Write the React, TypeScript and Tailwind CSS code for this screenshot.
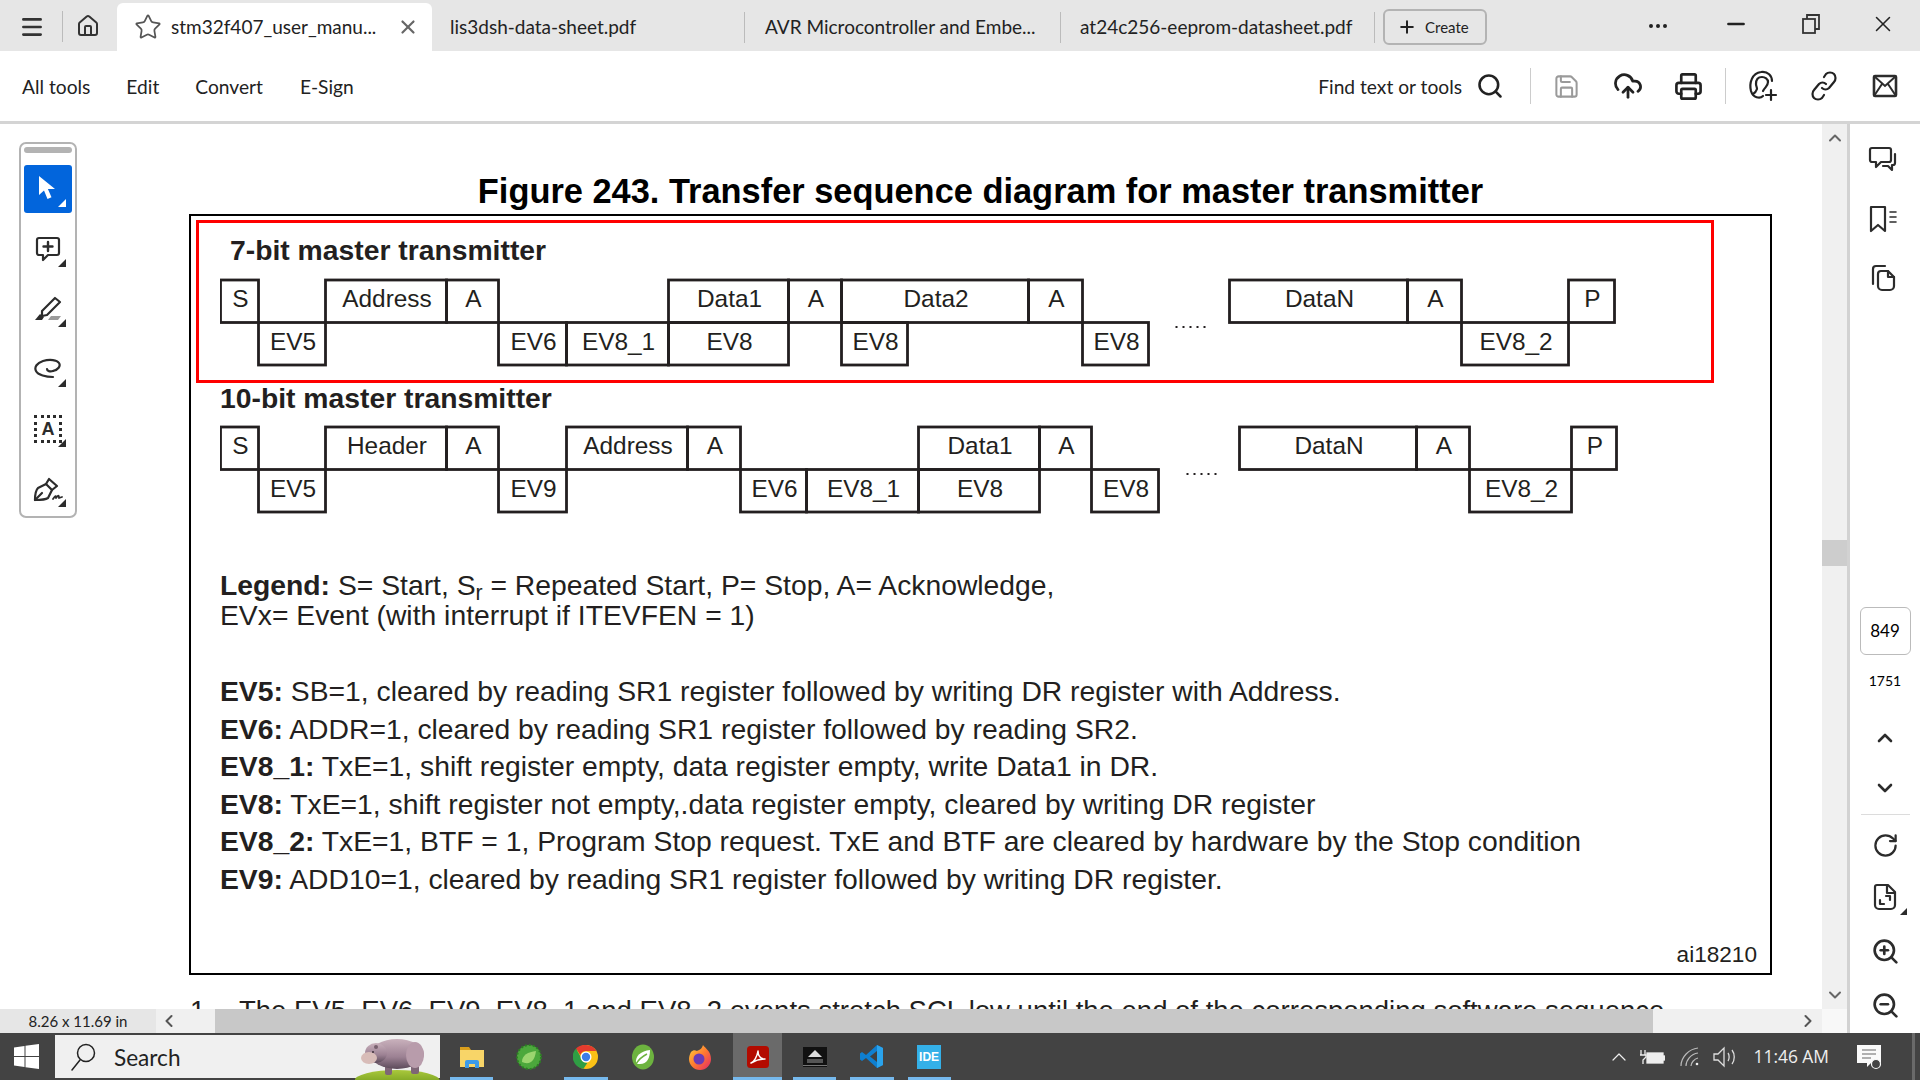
import React from 'react';
import {
  ChevronDown,
  ChevronLeft,
  ChevronRight,
  ChevronUp,
  CloudUpload,
  Home,
  Menu,
  Minus,
  MoreHorizontal,
  Plus,
  Printer,
  RotateCw,
  Save,
  Search,
  Star,
  X,
  ZoomIn,
  ZoomOut,
} from 'lucide-react';

// Cells of a sequence diagram: [left, right, row, label]; row 0 is the top row
type Cell = [number, number, number, string];

const sevenBit: Cell[] = [
  [220, 258, 0, 'S'],
  [258, 325, 1, 'EV5'],
  [325, 446, 0, 'Address'],
  [446, 498, 0, 'A'],
  [498, 566, 1, 'EV6'],
  [566, 668, 1, 'EV8_1'],
  [668, 788, 0, 'Data1'],
  [668, 788, 1, 'EV8'],
  [788, 841, 0, 'A'],
  [841, 1028, 0, 'Data2'],
  [841, 907, 1, 'EV8'],
  [1028, 1082, 0, 'A'],
  [1082, 1148, 1, 'EV8'],
  [1229, 1407, 0, 'DataN'],
  [1407, 1461, 0, 'A'],
  [1461, 1568, 1, 'EV8_2'],
  [1568, 1614, 0, 'P'],
];

const tenBit: Cell[] = [
  [220, 258, 0, 'S'],
  [258, 325, 1, 'EV5'],
  [325, 446, 0, 'Header'],
  [446, 498, 0, 'A'],
  [498, 566, 1, 'EV9'],
  [566, 687, 0, 'Address'],
  [687, 740, 0, 'A'],
  [740, 806, 1, 'EV6'],
  [806, 918, 1, 'EV8_1'],
  [918, 1039, 0, 'Data1'],
  [918, 1039, 1, 'EV8'],
  [1039, 1091, 0, 'A'],
  [1091, 1158, 1, 'EV8'],
  [1239, 1416, 0, 'DataN'],
  [1416, 1469, 0, 'A'],
  [1469, 1571, 1, 'EV8_2'],
  [1571, 1616, 0, 'P'],
];

const events = [
  ['EV5:', ' SB=1, cleared by reading SR1 register followed by writing DR register with Address.'],
  ['EV6:', ' ADDR=1, cleared by reading SR1 register followed by reading SR2.'],
  ['EV8_1:', ' TxE=1, shift register empty, data register empty, write Data1 in DR.'],
  ['EV8:', ' TxE=1, shift register not empty,.data register empty, cleared by writing DR register'],
  ['EV8_2:', ' TxE=1, BTF = 1, Program Stop request. TxE and BTF are cleared by hardware by the Stop condition'],
  ['EV9:', ' ADD10=1, cleared by reading SR1 register followed by writing DR register.'],
];

// Drawn with the page's left edge at x=220 and 2px above the first row
const Sequence = ({ cells, dotsX }: { cells: Cell[]; dotsX: number }) => (
  <svg width="1420" height="90" className="block font-['Liberation_Sans']">
    {cells.map(([left, right, row, label], i) => (
      <g key={i}>
        <rect
          x={left - 219.5}
          y={row === 0 ? 2 : 44.5}
          width={right - left}
          height={42.5}
          fill="none"
          stroke="#231f20"
          strokeWidth="2.8"
        />
        <text
          x={(left + right) / 2 - 218.5}
          y={row === 0 ? 29 : 72}
          textAnchor="middle"
          fontSize="24.4"
          fill="#231f20"
        >
          {label}
        </text>
      </g>
    ))}
    {[0, 7, 14, 21, 28].map((d) => (
      <rect key={d} x={dotsX - 218.5 + d} y={48} width="2" height="2" fill="#231f20" />
    ))}
  </svg>
);

const Corner = ({ color = 'border-b-[#2c2c2c]' }: { color?: string }) => (
  <span className={`absolute bottom-[6px] right-[6px] w-0 h-0 border-l-[8px] border-l-transparent border-b-[8px] ${color}`} />
);

const IconProps = { fill: 'none', stroke: 'currentColor', strokeLinecap: 'round', strokeLinejoin: 'round' } as const;

const LeftTools = () => (
  <div className="ml-[19px] mt-[18px] w-[58px] h-[376px] border-2 border-[#b3b3b3] rounded-[7px] bg-white flex flex-col items-center text-[#2c2c2c]">
    <div className="mt-[3px] w-12 h-[6px] rounded-[3px] bg-[#b3b3b3]" />
    <div className="mt-3 flex flex-col gap-3">
      <div className="relative w-12 h-12 rounded-[3px] bg-[#0265dc] flex items-center justify-center">
        <svg width="26" height="28" viewBox="0 0 26 28">
          <path d="M4 1v19l5-4.5 3.500 8.500 4-1.800-3.600-8.200H20z" fill="#fff" />
        </svg>
        <Corner color="border-b-white" />
      </div>
      <div className="relative w-12 h-12 flex items-center justify-center">
        <svg width="26" height="26" viewBox="0 0 26 26" {...IconProps} strokeWidth="2.2">
          <path d="M4 2h18a2 2 0 0 1 2 2v13a2 2 0 0 1-2 2H13l-5 5v-5H4a2 2 0 0 1-2-2V4a2 2 0 0 1 2-2z" />
          <path d="M13 6v9M8.500 10.500h9" strokeWidth="2.4" />
        </svg>
        <Corner />
      </div>
      <div className="relative w-12 h-12 flex items-center justify-center">
        <svg width="28" height="26" viewBox="0 0 28 26">
          <path d="M8 15 21 2l5 4-13 13-5 1z" {...IconProps} strokeWidth="2.2" />
          <path d="M1 24l5-6 4 3-2 3z" fill="#2c2c2c" />
          <path d="M14 24l3-4h10l-3 4z" fill="#9b9b9b" />
        </svg>
        <Corner />
      </div>
      <div className="relative w-12 h-12 flex items-center justify-center">
        <svg width="28" height="22" viewBox="0 0 28 22" {...IconProps} strokeWidth="2.2">
          <path d="M19 13c5-1 8-5 6-8-2-3-9-4-16-2C3 5 0 9 2 13c2 4 10 6 17 6" />
          <path d="M19 13c-3 1-6 0-6-2" />
        </svg>
        <Corner />
      </div>
      <div className="relative w-12 h-12 flex items-center justify-center">
        <div className="w-[28px] h-[28px] border-[3px] border-dotted border-[#2c2c2c] flex items-center justify-center font-['Liberation_Sans'] font-bold text-[18px] leading-none">
          A
        </div>
        <Corner />
      </div>
      <div className="relative w-12 h-12 flex items-center justify-center">
        <svg width="30" height="26" viewBox="0 0 30 26" {...IconProps} strokeWidth="2.2">
          <path d="M2 24c0-5 1-10 3-12l8-4 6 6-4 8c-3 2-8 2-13 2z" />
          <path d="M13 8l3-5 8 7-5 4M2 24l7-7" />
          <path d="M20 23c2-3 3-4 3-1 2-3 3-3 3 0l3-1" strokeWidth="1.8" />
        </svg>
        <Corner />
      </div>
    </div>
  </div>
);

const Page = () => (
  <div className="w-[1583px] text-[#231f20] font-['Liberation_Sans']">
    <h1 className="pt-[45px] mb-[1px] text-center text-[34.4px] leading-[44px] font-bold text-black">
      Figure 243. Transfer sequence diagram for master transmitter
    </h1>
    <div className="relative h-[761px] border-2 border-black pl-[29px]">
      <div className="absolute left-[5px] top-[4px] w-[1518px] h-[163px] border-[3px] border-[#ff0000]" />
      <h2 className="mt-[16px] ml-[10px] text-[28.3px] leading-[36px] font-bold">7-bit master transmitter</h2>
      <div className="mt-[10px]">
        <Sequence cells={sevenBit} dotsX={1174} />
      </div>
      <h2 className="mt-[12px] text-[28.3px] leading-[36px] font-bold">10-bit master transmitter</h2>
      <div className="mt-[9px]">
        <Sequence cells={tenBit} dotsX={1185} />
      </div>
      <div className="mt-[55px] text-[28.3px] leading-[30px]">
        <p>
          <b>Legend:</b> S= Start, S<sub>r</sub> = Repeated Start, P= Stop, A= Acknowledge,
        </p>
        <p>EVx= Event (with interrupt if ITEVFEN = 1)</p>
      </div>
      <div className="mt-[43px] text-[28.3px] leading-[37.6px]">
        {events.map(([name, text]) => (
          <p key={name}>
            <b>{name}</b>
            {text}
          </p>
        ))}
      </div>
      <p className="mt-[42px] pr-[13px] text-right text-[22.6px] leading-[28px]">ai18210</p>
    </div>
    <p className="mt-[20px] text-[27.5px] leading-[32px] whitespace-nowrap flex">
      <span className="w-[50px] pl-[1px]">1.</span>
      The EV5, EV6, EV9, EV8_1 and EV8_2 events stretch SCL low until the end of the corresponding software sequence.
    </p>
  </div>
);

const SidePanel = () => (
  <div className="w-[73px] shrink-0 border-l-[3px] border-[#d2d2d2] bg-white pt-[6px] flex flex-col items-center text-[#2c2c2c] font-['Lato',sans-serif]">
    <div className="mr-[4px] h-[59px] flex items-center">
      <svg width="30" height="28" viewBox="0 0 30 28" {...IconProps} strokeWidth="2.2">
        <path d="M4 2h17a2 2 0 0 1 2 2v10a2 2 0 0 1-2 2h-8l-5 5v-5H4a2 2 0 0 1-2-2V4a2 2 0 0 1 2-2z" />
        <path d="M27 8v9a2 2 0 0 1-2 2h-1v5l-4-4h-5" />
      </svg>
    </div>
    <div className="mr-[4px] h-[59px] flex items-center">
      <svg width="30" height="28" viewBox="0 0 30 28" {...IconProps} strokeWidth="2.2">
        <path d="M3 2h14v24l-7-6-7 6z" />
        <path d="M22 7h6M22 12h6M22 17h6" strokeWidth="1.6" />
      </svg>
    </div>
    <div className="mr-[4px] h-[59px] flex items-center">
      <svg width="26" height="28" viewBox="0 0 26 28" {...IconProps} strokeWidth="2.2">
        <path d="M3 20V5a3 3 0 0 1 3-3h9" />
        <path d="M8 10a3 3 0 0 1 3-3h7l6 6v9a4 4 0 0 1-4 4h-8a4 4 0 0 1-4-4z" />
        <path d="M18 7v6h6" />
      </svg>
    </div>
    <div className="mt-[300px] w-[51px] h-12 border border-[#bbb] rounded-[6px] flex items-center justify-center text-[17px] text-black">
      849
    </div>
    <div className="h-[50px] flex items-center text-[14px] text-black">1751</div>
    <div className="mt-2 h-[50px] flex items-center">
      <ChevronUp size={24} strokeWidth={2.6} />
    </div>
    <div className="h-[50px] flex items-center">
      <ChevronDown size={24} strokeWidth={2.6} />
    </div>
    <div className="mt-[1px] w-[49px] h-px bg-[#dcdcdc]" />
    <div className="mt-1 h-[52px] flex items-center">
      <RotateCw size={27} strokeWidth={2} />
    </div>
    <div className="relative h-[52px] w-[50px] flex items-center justify-center">
      <svg width="24" height="28" viewBox="0 0 24 28" {...IconProps} strokeWidth="2.2">
        <path d="M4 2h11l7 7v13a4 4 0 0 1-4 4H6a4 4 0 0 1-4-4V4a2 2 0 0 1 2-2z" />
        <path d="M14 2v8h8" />
        <path d="M7 21v-4M7 21h4M17 13v4M17 13h-4" />
      </svg>
      <span className="absolute bottom-[8px] right-[3px] w-0 h-0 border-l-[7px] border-l-transparent border-b-[7px] border-b-[#2c2c2c]" />
    </div>
    <div className="mt-[2px] h-[52px] flex items-center">
      <ZoomIn size={29} strokeWidth={2.2} />
    </div>
    <div className="mt-[2px] h-[52px] flex items-center">
      <ZoomOut size={29} strokeWidth={2.2} />
    </div>
  </div>
);

const Hippo = () => (
  <svg width="85" height="47" viewBox="0 0 85 47" className="block shrink-0">
    <defs>
      <linearGradient id="hippoBody" x1="0" y1="0" x2="0" y2="1">
        <stop offset="0" stopColor="#c9b1bc" />
        <stop offset="0.6" stopColor="#9c8193" />
        <stop offset="1" stopColor="#5c4a5a" />
      </linearGradient>
      <linearGradient id="hill" x1="0" y1="0" x2="0" y2="1">
        <stop offset="0" stopColor="#a9c83c" />
        <stop offset="1" stopColor="#5c8a10" />
      </linearGradient>
    </defs>
    <ellipse cx="42" cy="48" rx="43" ry="11" fill="url(#hill)" />
    <rect x="30" y="28" width="7" height="14" rx="2" fill="#7e6676" />
    <rect x="56" y="28" width="8" height="13" rx="2" fill="#7e6676" />
    <ellipse cx="42" cy="21" rx="27" ry="15" fill="url(#hippoBody)" />
    <ellipse cx="21" cy="20" rx="11" ry="10" fill="url(#hippoBody)" />
    <ellipse cx="14" cy="25" rx="8" ry="6" fill="#d8bcb8" />
    <ellipse cx="60" cy="22" rx="9" ry="13" fill="#b89cab" />
    <circle cx="21" cy="14" r="2" fill="#77606e" />
    <circle cx="18" cy="19" r="1" fill="#3d2f38" />
  </svg>
);

const TaskIcons = [
  <svg key="files" width="24" height="26" viewBox="0 0 24 26">
    <path d="M0 3h9l2 3H0z" fill="#d99e1c" />
    <rect y="6" width="24" height="17" fill="#f8d568" />
    <path d="M5 24v-6a2 2 0 0 1 2-2h10a2 2 0 0 1 2 2v6h-4v-4H9v4z" fill="#3d9be9" />
  </svg>,
  <svg key="spring-tool" width="26" height="26" viewBox="0 0 26 26">
    <circle cx="13" cy="13" r="12" fill="#4ca83c" />
    <circle cx="13" cy="13" r="12" fill="none" stroke="#2c7d24" strokeWidth="2" strokeDasharray="2 2" />
    <path d="M6 18c0-7 6-10 14-11-1 8-4 13-11 12z" fill="#9bd56f" />
  </svg>,
  <svg key="chrome" width="26" height="26" viewBox="0 0 26 26">
    <circle cx="13" cy="13" r="12" fill="#fbc116" />
    <path d="M13 1a12 12 0 0 1 10.400 6H13a6 6 0 0 0-5.700 3.900L3 4.600A12 12 0 0 1 13 1z" fill="#e33b2e" />
    <path d="M3 4.600l5 9a6 6 0 0 0 6.300 5.300L10.500 24.700A12 12 0 0 1 3 4.600z" fill="#2f9e44" />
    <circle cx="13" cy="13" r="5.500" fill="#fff" />
    <circle cx="13" cy="13" r="4.200" fill="#3b7de8" />
  </svg>,
  <svg key="spring" width="24" height="26" viewBox="0 0 24 26">
    <ellipse cx="12" cy="13" rx="11" ry="12.500" fill="#6db33f" />
    <path d="M5 19c-1-7 5-12 14-13 0 8-3 14-10 14-2 0-3 0-4-1z" fill="#fff" />
    <path d="M5 20c3-5 7-8 11-10" stroke="#6db33f" strokeWidth="1.500" fill="none" />
  </svg>,
  <svg key="firefox" width="24" height="26" viewBox="0 0 24 26">
    <defs>
      <linearGradient id="fox" x1="0" y1="0" x2="1" y2="1">
        <stop offset="0" stopColor="#ffd43b" />
        <stop offset="0.5" stopColor="#ff7a2f" />
        <stop offset="1" stopColor="#e3246b" />
      </linearGradient>
    </defs>
    <path d="M15 1c2 3 8 6 8 14a11 11 0 0 1-22 0c0-3 1-5 2-7 2-2 4-2 6-1 2-1 5-2 6-6z" fill="url(#fox)" />
    <circle cx="11" cy="15" r="5.500" fill="#6a3bb5" />
  </svg>,
  <svg key="acrobat" width="22" height="22" viewBox="0 0 22 22">
    <rect width="22" height="22" rx="3.500" fill="#b30b00" />
    <path d="M4 17c3-1 6-6 7-12 0 5 3 8 7 8-5 0-9 1-14 4z" fill="none" stroke="#fff" strokeWidth="1.500" strokeLinejoin="round" />
  </svg>,
  <svg key="terminal" width="24" height="20" viewBox="0 0 24 20">
    <rect width="24" height="20" fill="#111" />
    <path d="M12 3l7 7H5z" fill="#ddd" />
    <rect x="4" y="12" width="16" height="4" fill="#555" />
    <rect y="18" width="24" height="1" fill="#777" />
  </svg>,
  <svg key="vscode" width="25" height="25" viewBox="0 0 25 25">
    <path d="M18 1l6 3v17l-6 3-11-10-4 3-2-1.500V9.500L3 8l4 3z" fill="#0f7fd0" />
    <path d="M18 1l6 3v17l-6 3z" fill="#2aa3ec" />
    <path d="M18 7l-7 5.500 7 5.500z" fill="#3f3f3f" />
  </svg>,
  <div key="ide" className="w-6 h-6 bg-[#34b0e8] flex items-center justify-center font-['Liberation_Sans'] font-bold text-white text-[12px] leading-none">
    IDE
  </div>,
];

const running = [true, false, true, false, false, true, true, true, true];

const TaskBar = () => (
  <div className="h-[47px] shrink-0 bg-[#434343] flex items-stretch text-[#eee]">
    <div className="w-[53px] flex items-center justify-center">
      <svg width="25" height="25" viewBox="0 0 25 25" fill="#fff">
        <path d="M0 3.500l10.500-1.500v10H0zM11.500 1.800 25 0v12H11.500zM0 13h10.500v10L0 21.500zM11.500 13H25v12l-13.500-1.800z" />
      </svg>
    </div>
    <div className="ml-[2px] w-[385px] mt-[2px] mb-[2px] bg-[#f0f0f0] flex items-center text-[#222]">
      <svg width="26" height="28" viewBox="0 0 26 28" className="ml-[15px]" {...IconProps} strokeWidth="1.500">
        <circle cx="16" cy="10" r="8.500" />
        <path d="M10 17 2 27" />
      </svg>
      <span className="ml-[18px] pt-[3px] text-[22.6px] font-['Lato',sans-serif]">Search</span>
      <div className="ml-auto self-end -mb-[2px]">
        <Hippo />
      </div>
    </div>
    <div className="ml-[3px] flex">
      {TaskIcons.map((icon, i) => (
        <div key={i} className="relative w-[57.2px] flex items-center justify-center">
          {i === 5 && <div className="absolute inset-y-0 left-[4px] right-[4px] bg-[#6a6a6a]" />}
          <div className="relative">{icon}</div>
          {running[i] && (
            <div className={`absolute bottom-0 h-[3px] bg-[#76b9ed] ${i === 5 ? 'left-[4px] right-[4px]' : 'left-[7px] right-[7px]'}`} />
          )}
        </div>
      ))}
    </div>
    <div className="ml-auto flex items-center pr-[5px]">
      <ChevronUp size={24} strokeWidth={1.2} />
      <svg width="26" height="16" viewBox="0 0 26 16" className="ml-[8px]" fill="none" stroke="#eee" strokeWidth="1.300">
        <path d="M2 1v5M6 1v5M1 6h6v2L4 11v4" />
        <rect x="8" y="4" width="16" height="10" fill="#eee" />
        <rect x="24" y="7" width="2" height="4" fill="#eee" />
      </svg>
      <svg width="20" height="20" viewBox="0 0 20 20" className="ml-[15px]" fill="none" stroke="#bbb" strokeWidth="1.200">
        <path d="M1 19C1 10 9 2 18 1M6 19c0-6 5-12 12-13M11 19c0-3 3-7 7-8" />
        <circle cx="17" cy="17" r="1.300" fill="#eee" stroke="none" />
      </svg>
      <svg width="24" height="22" viewBox="0 0 24 22" className="ml-[13px]" fill="none" stroke="#ddd" strokeWidth="1.300">
        <path d="M1 8h4l6-6v18l-6-6H1z" />
        <path d="M15 7c1.500 2 1.500 6 0 8M19 4c3 4 3 10 0 14" />
      </svg>
      <span className="ml-[17px] text-[17.400px] font-['Open_Sans',sans-serif] leading-none">11:46 AM</span>
      <svg width="26" height="26" viewBox="0 0 26 26" className="ml-[27px]">
        <path d="M1 1h24v18H15l-4 4v-4H1z" fill="#fafafa" />
        <path d="M6 6h14M6 10h14M6 14h9" stroke="#666" strokeWidth="1.200" />
        <circle cx="20" cy="20" r="4.500" fill="#434343" stroke="#fafafa" strokeWidth="1.200" />
      </svg>
      <div className="ml-[30px] w-[3px] h-full bg-[#6a6a6a]" />
    </div>
  </div>
);

const App: React.FC = () => {
  return (
    <div className="w-[1920px] h-[1080px] overflow-hidden flex flex-col bg-white font-['Lato',sans-serif] text-[#222]">
      {/* Tabs */}
      <div className="h-[51px] shrink-0 bg-[#e6e6e6] flex text-[19px]">
        <div className="w-[63px] flex items-center justify-center border-r border-[#bbb] mt-[11px] mb-[9px] pl-[2px]">
          <Menu size={26} strokeWidth={2.4} className="text-[#333]" />
        </div>
        <div className="w-[50px] flex items-center justify-center">
          <Home size={24} strokeWidth={2} className="text-[#333]" />
        </div>
        <div className="ml-[4px] w-[315px] mt-[3px] bg-white rounded-t-[6px] flex items-center pl-[17px]">
          <Star size={28} strokeWidth={1.5} className="text-[#555]" />
          <span className="ml-[9px] w-[216px] whitespace-nowrap">stm32f407_user_manu...</span>
          <X size={22} strokeWidth={2.4} className="ml-[10px] text-[#666]" />
        </div>
        <div className="w-[313px] mt-[12px] mb-[8px] pl-[18px] flex items-center border-r border-[#bbb]">lis3dsh-data-sheet.pdf</div>
        <div className="w-[316px] mt-[12px] mb-[8px] pl-[20px] flex items-center border-r border-[#bbb] whitespace-nowrap">AVR Microcontroller and Embe...</div>
        <div className="w-[314px] mt-[12px] mb-[8px] pl-[19px] flex items-center border-r border-[#bbb] whitespace-nowrap">at24c256-eeprom-datasheet.pdf</div>
        <div className="ml-[8px] mt-[9px] w-[104px] h-[36px] border-2 border-[#b3b3b3] rounded-[6px] flex items-center pl-[12px] text-[15px]">
          <Plus size={20} strokeWidth={2.4} />
          <span className="ml-[8px]">Create</span>
        </div>
        <div className="ml-auto flex items-start pr-[7px] text-[#222]">
          <div className="w-[60px] h-[51px] flex items-center justify-center">
            <MoreHorizontal size={24} strokeWidth={2} />
          </div>
          <div className="ml-[18px] w-[60px] h-[48px] flex items-center justify-center">
            <Minus size={26} strokeWidth={2.4} />
          </div>
          <div className="ml-[15px] w-[60px] h-[48px] flex items-center justify-center">
            <svg width="20" height="20" viewBox="0 0 20 20" fill="none" stroke="#333" strokeWidth="1.800">
              <rect x="2" y="5" width="12" height="14" />
              <path d="M6 5V1h12v14h-4" />
            </svg>
          </div>
          <div className="ml-[12px] w-[60px] h-[48px] flex items-center justify-center">
            <X size={26} strokeWidth={1.4} />
          </div>
        </div>
      </div>

      {/* Toolbar */}
      <div className="h-[73px] shrink-0 border-b-[3px] border-[#d4d4d4] flex items-center text-[19.2px]">
        <span className="ml-[22px] pt-[3px]">All tools</span>
        <span className="ml-[36px] pt-[3px]">Edit</span>
        <span className="ml-[36px] pt-[3px]">Convert</span>
        <span className="ml-[37px] pt-[3px]">E-Sign</span>
        <div className="ml-auto flex items-center pr-[5px]">
          <span className="pt-[2px]">Find text or tools</span>
          <Search size={28} strokeWidth={2.2} className="ml-[14px]" />
          <div className="ml-[26px] w-px h-[36px] bg-[#ccc]" />
          <div className="ml-[5px] w-[61px] flex justify-center">
            <Save size={27} strokeWidth={1.8} className="text-[#9a9a9a]" />
          </div>
          <div className="w-[61px] flex justify-center">
            <CloudUpload size={30} strokeWidth={2.2} />
          </div>
          <div className="w-[61px] flex justify-center">
            <Printer size={29} strokeWidth={2.2} />
          </div>
          <div className="ml-[6px] w-px h-[36px] bg-[#ccc]" />
          <div className="ml-[6px] w-[61px] flex justify-center">
            <svg width="30" height="32" viewBox="0 0 30 32" {...IconProps} strokeWidth="2.2">
              <path d="M15 26c-3 3-10 2-12-5C1 13 4 3 13 2c7-1 11 4 11 9" />
              <path d="M15 21c2-4 5-5 5-9 0-3-3-5-6-5-4 0-6 3-6 7 0 2 1 3 1 5-1 3-2 4-4 5" />
              <path d="M23 20v10M18 25h10" />
            </svg>
          </div>
          <div className="w-[61px] flex justify-center">
            <svg width="28" height="30" viewBox="0 0 28 30" {...IconProps} strokeWidth="2.2">
              <path d="M12 17c2 2 5 2 7 0l5-6c2-2 2-6 0-8s-6-2-8 0l-2 3" />
              <path d="M16 13c-2-2-5-2-7 0l-5 6c-2 2-2 6 0 8s6 2 8 0l2-3" />
            </svg>
          </div>
          <div className="w-[61px] flex justify-center">
            <svg width="26" height="24" viewBox="0 0 26 24" fill="none" stroke="#2c2c2c" strokeWidth="2.600">
              <rect x="2" y="2" width="22" height="20" rx="1" />
              <path d="M2 2l11 10L24 2M2 22l8-12M24 22l-8-12" strokeWidth="2" />
            </svg>
          </div>
        </div>
      </div>

      {/* Document area */}
      <div className="flex-1 min-h-0 flex">
        <div className="w-[1847px] flex flex-col">
          <div className="flex-1 min-h-0 flex">
            <div className="w-[189px] shrink-0">
              <LeftTools />
            </div>
            <div className="flex-1 min-w-0 overflow-hidden">
              <Page />
            </div>
            <div className="w-[25px] shrink-0 bg-[#f0f0f0] flex flex-col items-center py-[4px] text-[#666]">
              <ChevronUp size={20} strokeWidth={2.4} />
              <div className="mt-[392px] w-full h-[26px] bg-[#cdcdcd]" />
              <ChevronDown size={20} strokeWidth={2.4} className="mt-auto" />
            </div>
          </div>
          <div className="h-[24px] shrink-0 flex text-[15px]">
            <div className="w-[156px] bg-[#e6e6e6] flex items-center justify-center">8.26 x 11.69 in</div>
            <div className="w-[59px] bg-[#f0f0f0] flex items-center pl-[3px] text-[#555]">
              <ChevronLeft size={20} strokeWidth={2.4} />
            </div>
            <div className="w-[1438px] bg-[#c8c8c8]" />
            <div className="flex-1 bg-[#f0f0f0] flex items-center justify-end pr-[4px] text-[#555]">
              <ChevronRight size={20} strokeWidth={2.4} />
            </div>
            <div className="w-[25px] bg-[#f8f8f8]" />
          </div>
        </div>
        <SidePanel />
      </div>

      <TaskBar />
    </div>
  );
};

export default App;
